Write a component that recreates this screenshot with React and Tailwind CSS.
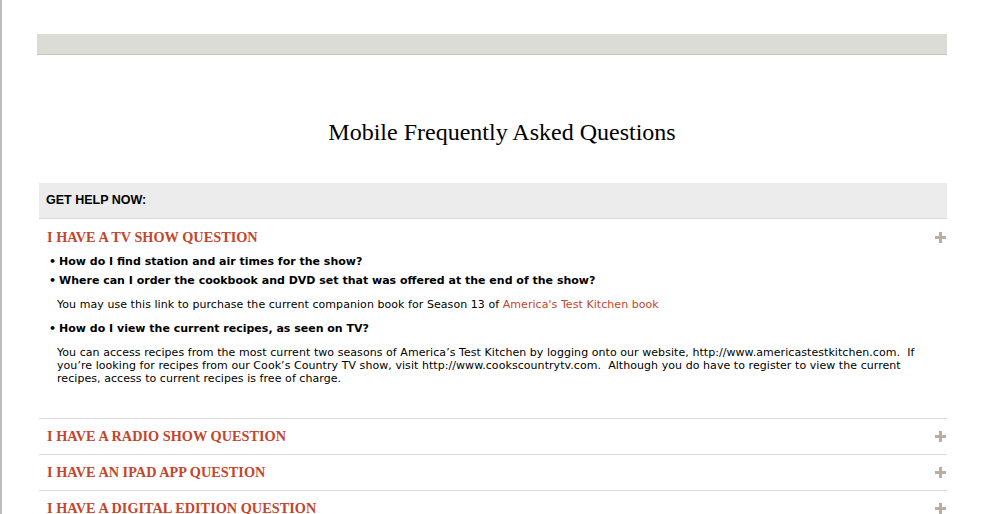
import React from "react";

const Plus = () => (
  <svg width="11" height="11" viewBox="0 0 11 11" className="shrink-0">
    <rect x="4" y="0" width="3" height="11" fill="#b8afa4" />
    <rect x="0" y="4" width="11" height="3" fill="#b8afa4" />
  </svg>
);

function Heading({ children }) {
  return (
    <div className="flex items-center justify-between pr-[1px]">
      <span className="text-[14.3px] leading-[16px] font-bold text-[#c4452b] font-['Liberation_Serif',serif]">
        {children}
      </span>
      <Plus />
    </div>
  );
}

function Bullet({ children, className = "" }) {
  return (
    <div className={"leading-[19px] font-bold pl-[2px] " + className}>
      <span className="mr-[3px]">•</span>
      {children}
    </div>
  );
}

export default function App() {
  return (
    <div className="min-h-[514px] bg-white border-l-2 border-[#bdbdbd] font-['DejaVu_Sans',sans-serif]">
      <div className="pt-[34px] pl-[35px] w-[945px]">
        <div className="h-[21px] bg-[#dcdcd6] border-b border-[#c5c6bc]" />
        <h1 className="mt-[65px] pl-[20px] text-center text-[24px] leading-[24px] text-black font-['Liberation_Serif',serif]">
          Mobile Frequently Asked Questions
        </h1>
        <div className="mt-[39px] ml-[2px]">
          <div className="h-[36px] bg-[#ececec] border-b border-[#d8d8d8] flex items-center pl-[7px]">
            <span className="text-[12.5px] font-bold text-black font-['Liberation_Sans',sans-serif]">
              GET HELP NOW:
            </span>
          </div>
          <div className="border-b border-[#dadada] pl-[8px] pt-[10px] pb-[33px]">
            <Heading>I HAVE A TV SHOW QUESTION</Heading>
            <div className="mt-[7px] text-[11px] text-black">
              <Bullet>How do I find station and air times for the show?</Bullet>
              <Bullet>Where can I order the cookbook and DVD set that was offered at the end of the show?</Bullet>
              <p className="mt-[8px] leading-[13px] pl-[10px] tracking-[0.06px]">
                You may use this link to purchase the current companion book for Season 13 of{" "}
                <span className="text-[#c4452b]">America's Test Kitchen book</span>
              </p>
              <Bullet className="mt-[8px]">How do I view the current recipes, as seen on TV?</Bullet>
              <p className="mt-[8px] leading-[13px] pl-[10px] pr-[20px] tracking-[0.06px]">
                You can access recipes from the most current two seasons of America’s Test Kitchen by logging onto our website, http://www.americastestkitchen.com.&nbsp; If you’re looking for recipes from our Cook’s Country TV show, visit http://www.cookscountrytv.com.&nbsp; Although you do have to register to view the current recipes, access to current recipes is free of charge.
              </p>
            </div>
          </div>
          {["I HAVE A RADIO SHOW QUESTION", "I HAVE AN IPAD APP QUESTION", "I HAVE A DIGITAL EDITION QUESTION"].map((t) => (
            <div key={t} className="h-[36px] border-b border-[#dadada] pl-[8px] pt-[9px]">
              <Heading>{t}</Heading>
            </div>
          ))}
        </div>
      </div>
    </div>
  );
}
